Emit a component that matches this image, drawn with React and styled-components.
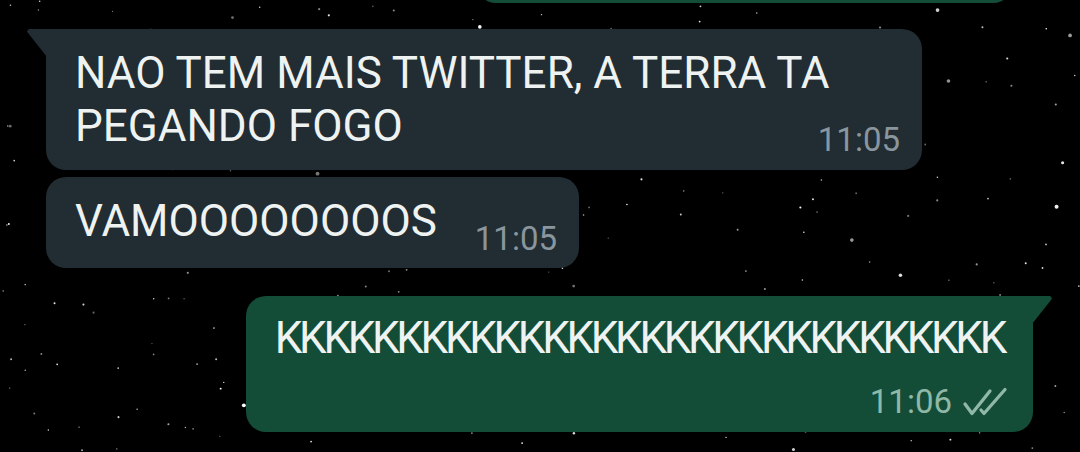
import React from 'react';
import styled, { createGlobalStyle, css } from 'styled-components';

const GlobalStyle = createGlobalStyle`
  html, body {
    margin: 0;
    padding: 0;
    background: #000;
  }
  body {
    font-family: Roboto, "Noto Sans", "Liberation Sans", sans-serif;
  }
`;

// deterministic star field
function makeStars(count, seed) {
  let s = seed;
  const rand = () => {
    s = (s * 16807) % 2147483647;
    return (s - 1) / 2147483646;
  };
  const stars = [];
  for (let i = 0; i < count; i++) {
    stars.push({
      x: rand() * 1080,
      y: rand() * 452,
      r: rand() < 0.85 ? 0.6 + rand() * 0.5 : 1.2 + rand() * 0.8,
      o: 0.35 + rand() * 0.65,
    });
  }
  return stars;
}

const stars = makeStars(320, 20231);

const messages = [
  {
    id: 1,
    side: 'in',
    tail: true,
    layout: 'stacked',
    text: 'NAO TEM MAIS TWITTER, A TERRA TA PEGANDO FOGO',
    time: '11:05',
  },
  {
    id: 2,
    side: 'in',
    layout: 'inline',
    text: 'VAMOOOOOOOOS',
    time: '11:05',
  },
  {
    id: 3,
    side: 'out',
    tail: true,
    layout: 'below',
    text: 'KKKKKKKKKKKKKKKKKKKKKKKKKKKKKK',
    tracking: -3.3,
    time: '11:06',
    read: true,
  },
];

export default function App() {
  return (
    <>
      <GlobalStyle />
      <Screen>
        <StarField width="1080" height="452" viewBox="0 0 1080 452">
          {stars.map((st, i) => (
            <circle key={i} cx={st.x} cy={st.y} r={st.r} fill="#fff" opacity={st.o} />
          ))}
        </StarField>
        <Chat>
          <PreviousBubble />
          {messages.map((m) => (
            <Bubble key={m.id} $side={m.side} $tail={m.tail} $layout={m.layout}>
              <MessageText $tracking={m.tracking}>{m.text}</MessageText>
              <Meta $side={m.side} $layout={m.layout}>
                <span>{m.time}</span>
                {m.read && <DoubleCheck />}
              </Meta>
            </Bubble>
          ))}
        </Chat>
      </Screen>
    </>
  );
}

function DoubleCheck() {
  return (
    <CheckIcon viewBox="0 0 48 30" fill="none">
      <path
        d="M5 17 L12 26.5 L30 4"
        stroke="currentColor"
        strokeWidth="3.3"
        strokeLinecap="round"
        strokeLinejoin="round"
      />
      <path
        d="M21 23 L24 26.5 L45 2.5"
        stroke="currentColor"
        strokeWidth="3.3"
        strokeLinecap="round"
        strokeLinejoin="round"
      />
    </CheckIcon>
  );
}

const Screen = styled.div`
  position: relative;
  width: 1080px;
  height: 452px;
  overflow: hidden;
  background: #000;
`;

const StarField = styled.svg`
  position: absolute;
  inset: 0;
  display: block;
`;

const Chat = styled.div`
  position: relative;
  display: flex;
  flex-direction: column;
  align-items: flex-start;
`;

const PreviousBubble = styled.div`
  align-self: flex-end;
  width: 537px;
  height: 40px;
  margin-top: -37px;
  margin-right: 67px;
  border-radius: 20px;
  background: #134d38;
`;

const inColor = '#212c33';
const outColor = '#134d38';

const Bubble = styled.div`
  position: relative;
  display: flex;
  box-sizing: border-box;
  border-radius: 20px;
  color: #eef2f1;

  ${(p) =>
    p.$side === 'in'
      ? css`
          margin-left: 46px;
          background: ${inColor};
        `
      : css`
          align-self: flex-end;
          margin-right: 47px;
          background: ${outColor};
        `}

  ${(p) =>
    p.$layout === 'stacked' &&
    css`
      flex-direction: column;
      max-width: 876px;
      margin-top: 26px;
      padding: 18px 22px 11px 29px;
    `}

  ${(p) =>
    p.$layout === 'inline' &&
    css`
      flex-direction: row;
      align-items: flex-start;
      gap: 38px;
      margin-top: 7px;
      padding: 18px 22px 10px 29px;
    `}

  ${(p) =>
    p.$layout === 'below' &&
    css`
      flex-direction: column;
      margin-top: 28px;
      padding: 16px 29px 11px 29px;
    `}

  ${(p) =>
    p.$tail &&
    p.$side === 'in' &&
    css`
      border-top-left-radius: 0;
      &::before {
        content: '';
        position: absolute;
        top: 0;
        left: -19px;
        width: 20px;
        height: 28px;
        background: ${inColor};
        clip-path: polygon(2px 0, 100% 0, 100% 100%, 1px 4px, 0 2px);
      }
    `}

  ${(p) =>
    p.$tail &&
    p.$side === 'out' &&
    css`
      border-top-right-radius: 0;
      &::after {
        content: '';
        position: absolute;
        top: 0;
        right: -19px;
        width: 20px;
        height: 28px;
        background: ${outColor};
        clip-path: polygon(0 0, calc(100% - 2px) 0, 100% 2px, calc(100% - 1px) 4px, 0 100%);
      }
    `}
`;

const MessageText = styled.div`
  font-size: 44px;
  line-height: 53px;
  letter-spacing: ${(p) => (p.$tracking ? `${p.$tracking}px` : '0')};
  white-space: pre-wrap;
`;

const Meta = styled.div`
  display: flex;
  align-items: center;
  gap: 8px;
  align-self: flex-end;
  font-size: 33px;
  line-height: 38px;
  white-space: nowrap;
  color: ${(p) => (p.$side === 'out' ? '#8fb8a6' : '#8a969e')};

  ${(p) =>
    p.$layout === 'stacked' &&
    css`
      margin-top: -32px;
    `}

  ${(p) =>
    p.$layout === 'inline' &&
    css`
      align-self: flex-start;
      margin-top: 25px;
    `}

  ${(p) =>
    p.$layout === 'below' &&
    css`
      margin-top: 18px;
      margin-right: -4px;
    `}
`;

const CheckIcon = styled.svg`
  width: 48px;
  height: 30px;
  color: #8fb8a6;
`;
